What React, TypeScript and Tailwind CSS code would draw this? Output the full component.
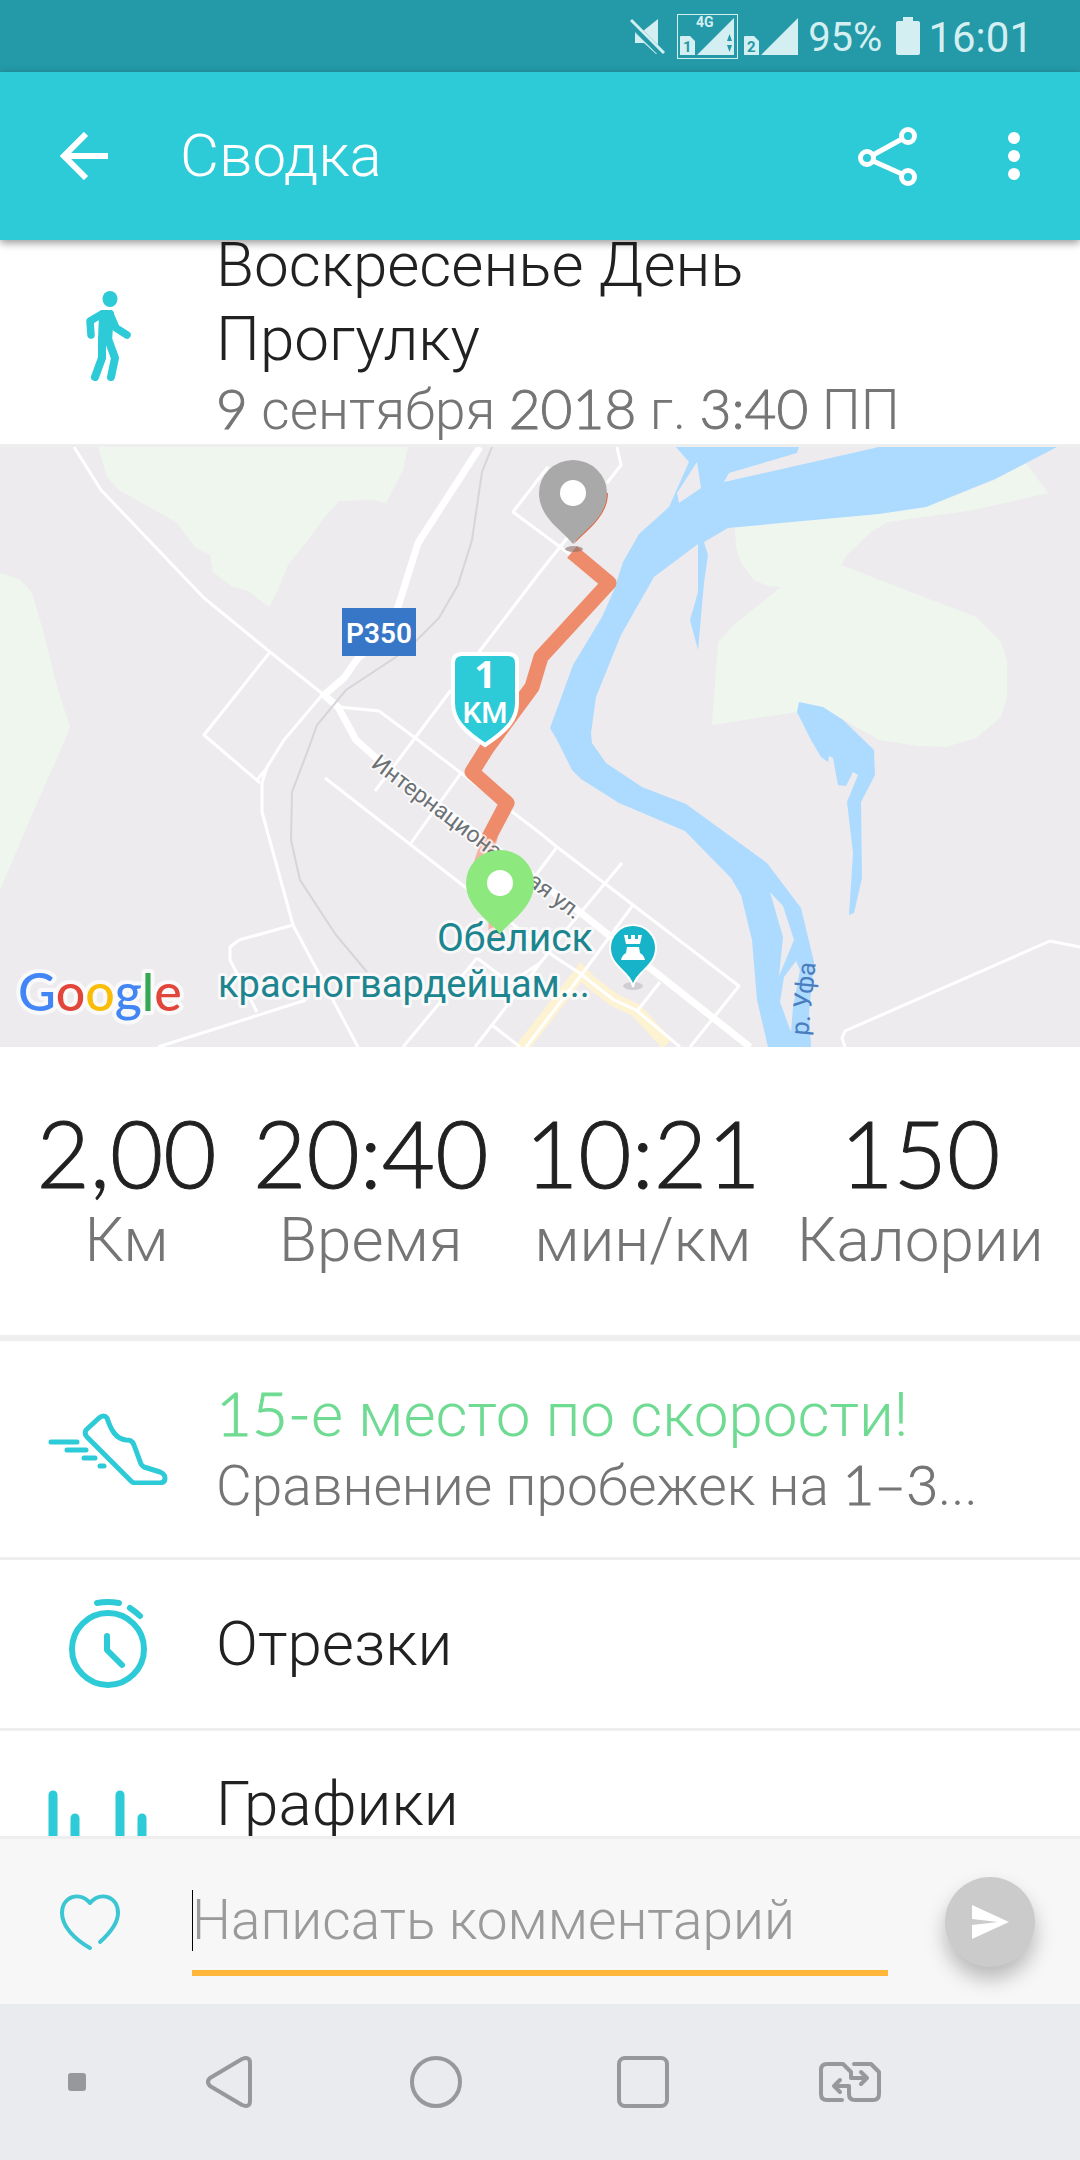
import type { ReactNode } from "react";

interface Stat {
  value: string;
  label: string;
}

const stats: Stat[] = [
  { value: "2,00", label: "Км" },
  { value: "20:40", label: "Время" },
  { value: "10:21", label: "мин/км" },
  { value: "150", label: "Калории" },
];

// digits use a slightly heavier face than the surrounding text
function Num({ children }: { children: ReactNode }) {
  return <span className="font-['Lato'] font-light [-webkit-text-stroke:1px]">{children}</span>;
}

function StatusBar() {
  return (
    <div className="flex h-[72px] shrink-0 items-center justify-end bg-[#2499a7] pr-[47px] font-normal text-[#d3eff1]">
      <svg className="mr-[11px] h-9 w-9" viewBox="0 0 36 36" fill="currentColor">
        <path d="M5 13h8L28 1v33l-4-3L5 15z" />
        <path d="M5 15v10h9l12 11h4z" />
        <path d="M0 4L32 36" stroke="#2499a7" strokeWidth="7" />
        <path d="M1 2L34 35" stroke="currentColor" strokeWidth="3" />
      </svg>
      <svg className="mr-1.5 h-[45px] w-[61px]" viewBox="0 0 61 45" fill="currentColor">
        <rect x=".5" y=".5" width="60" height="44" fill="none" stroke="currentColor" />
        <text x="19" y="13" fontSize="14" fontWeight="700">4G</text>
        <path d="M3 23q0-1 1-1h9l5 5v14H3zM20 41L57 4v37z" />
        <path d="M50 27l2.500-7 2.500 7zM50 31l2.500 7 2.500-7z" fill="#2499a7" />
        <text x="6" y="38" fontSize="15" fontWeight="700" fill="#2499a7">1</text>
      </svg>
      <svg className="mr-2.5 h-[45px] w-[54px]" viewBox="0 0 54 45" fill="currentColor">
        <path d="M0 23q0-1 1-1h9l5 5v14H0zM17 41L54 4v37z" />
        <text x="3" y="38" fontSize="15" fontWeight="700" fill="#2499a7">2</text>
      </svg>
      <span className="pt-1 text-[40px] leading-none">95%</span>
      <svg className="mr-2 ml-3.5 h-[38px] w-6" viewBox="0 0 24 38" fill="currentColor">
        <path d="M7 0h10v4h5q2 0 2 2v30q0 2-2 2H2q-2 0-2-2V6q0-2 2-2h5z" />
      </svg>
      <span className="pt-1 text-[42px] leading-none">16:01</span>
    </div>
  );
}

function Toolbar() {
  return (
    <header className="relative z-10 flex h-[168px] shrink-0 items-center bg-[#2dcad7] pr-[42px] pl-[60px] text-white shadow-[0_3px_8px_rgba(0,0,0,0.4)]">
      <button aria-label="Назад">
        <svg className="h-12 w-12" viewBox="0 0 48 48" fill="none" stroke="currentColor" strokeWidth="6">
          <path d="M26 2L4 24l22 22M4 24h44" />
        </svg>
      </button>
      <h1 className="ml-[72px] flex-1 text-[60px] leading-none">Сводка</h1>
      <button aria-label="Поделиться" className="mr-[72px]">
        <svg className="h-[60px] w-[60px]" viewBox="0 0 60 60" fill="none" stroke="currentColor" strokeWidth="5">
          <circle cx="9" cy="32" r="6.500" />
          <circle cx="50" cy="10" r="6.500" />
          <circle cx="50" cy="51" r="6.500" />
          <path d="M15 29L44 13M15 35l29 13" strokeWidth="5" />
        </svg>
      </button>
      <button aria-label="Ещё" className="px-[18px]">
        <svg className="h-12 w-3" viewBox="0 0 12 48" fill="currentColor">
          <circle cx="6" cy="6" r="6" />
          <circle cx="6" cy="24" r="6" />
          <circle cx="6" cy="42" r="6" />
        </svg>
      </button>
    </header>
  );
}

function RouteMap() {
  return (
    <svg
      role="img"
      aria-label="Карта маршрута"
      className="block h-[600px] w-full bg-[#edebee] font-normal"
      viewBox="0 0 1080 600"
      preserveAspectRatio="xMidYMid slice"
    >
      {/* parks */}
      <g fill="#eef6ee">
        <path d="M98 0L107 30 119 43 176 75 195 100 210 108 213 125 231 139 248 144 269 160 276 147 288 118 308 93 324 71 339 54 372 53 386 56 403 23 408 0z" />
        <path d="M0 126L21 133 32 146 43 183 57 240 70 280 62 300 34 363 0 443z" />
        <path d="M735 80L879 66 926 60 995 33 1026 16 1048 46 974 63 888 75 871 85 847 108 841 118 976 170 1001 195 1007 213V250L1001 270 976 291 946 300 919 299 879 293 822 260 797 265 712 278 718 195 736 176 781 140 767 139 754 133 741 116 736 100z" />
      </g>

      {/* river */}
      <g fill="#addbff">
        <path
          fillRule="evenodd"
          d="M676 0L689 15 669 60 639 87 623 115 614 143 602 170 573 218 550 281 557 293 572 323 581 332 619 356 685 384 731 431 741 448 752 493 757 553 768 600H811L809 566 814 515 801 461 767 416 686 357 642 340 606 316 592 296 591 286 596 250 621 188 654 130 698 97V145L690 173 698 203 704 136 708 108 704 95 728 81 879 67 926 60 995 32 1057 0H879L724 35 729 26 797 6 799 0zM697 15L701 41 679 56 677 46zM770 445L783 459 794 493 779 529 783 490zM796 514L800 523 793 560 791 585 780 555 784 530z"
        />
        <path d="M799 255L823 260 843 273 874 303 875 328 861 355 862 431 854 466 849 468 853 406 847 355 858 328 853 325 846 339 838 338 833 311 829 309 828 315 821 310 811 293 797 265z" />
      </g>

      {/* roads */}
      <g fill="none" stroke="#fdf3d2" strokeWidth="13">
        <path d="M518 606L540 578 581 525 592 536 614 553 636 563 667 597" />
      </g>
      <g fill="none" stroke="#fff" strokeWidth="3" strokeLinejoin="round">
        <path d="M74 0L101 43 204 151 270 205 324 248M270 205L204 288 260 336M257 333L267 321" />
        <path d="M322 248L284 293 267 320 262 336V365L293 478 317 523 358 600" />
        <path d="M339 260L379 264 418 293 461 326 540 386 557 400 633 458 739 539 690 600" />
        <path d="M451 243L406 303 375 344M479 205L540 125 572 85M540 30L513 65 571 108M540 30L548 20M617 0L621 18 607 36" />
        <path d="M325 331L465 440 555 510 581 527 592 536 614 553 636 563 680 600M461 326L411 396M622 416L566 483 492 578M557 400L530 436M633 458L585 523 526 600M660 535L638 563" />
        <path d="M477 511L403 600M477 511L510 536 540 516M475 600L492 578 520 600" />
        <path d="M293 478L239 493 230 500V513L257 565M158 600L306 553" />
        <path d="M1080 500L1050 494 845 584 842 591 845 600" />
        <path d="M480 0L418 96 398 160 384 190 358 211 344 231 324 248 338 260 356 293 375 310 581 466 650 521 750 600" strokeWidth="7" />
      </g>
      <path
        d="M492 0L482 25 472 93 458 138 439 171 417 193 396 210 346 243 317 278 308 303 292 345 291 393 300 433 336 488 367 525"
        fill="none"
        stroke="#d4d6d9"
        strokeWidth="2"
      />

      {/* track */}
      <g fill="none" strokeWidth="15" strokeLinejoin="round">
        <path d="M491 388L480 420 496 460V495" stroke="#f3b5a3" />
        <path d="M572 105L609 136 541 210 532 240 487 301 472 325 507 356 488 392" stroke="#ee8b6b" />
      </g>
      <ellipse cx="574" cy="102" rx="9" ry="3" fill="#8b6f68" opacity=".6" />

      <g paintOrder="stroke" stroke="#fff" strokeOpacity=".7" strokeLinejoin="round">
        <text transform="translate(370 319) rotate(37)" fontSize="23" fill="#6d7276" strokeWidth="4">
          Интернациональная ул.
        </text>
        <text transform="translate(808 589) rotate(-84)" fontSize="25" fill="#4a7cc0" strokeWidth="0">
          р. Уфа
        </text>
        <text x="437" y="504" fontSize="39" fill="#1c858f" strokeWidth="6">
          Обелиск
        </text>
        <text x="218" y="550" fontSize="38" fill="#1c858f" strokeWidth="6">
          красногвардейцам...
        </text>
      </g>

      {/* road shield */}
      <rect x="342" y="161" width="74" height="48" fill="#3877c7" />
      <text x="379" y="196" textAnchor="middle" fontSize="28" fontWeight="600" fill="#fff">
        P350
      </text>

      {/* kilometre marker */}
      <path
        d="M462 207H508Q517 207 517 216V256C517 273 506 284 485 298C464 284 453 273 453 256V216Q453 207 462 207z"
        fill="#2dcad7"
        stroke="#fff"
        strokeWidth="4"
      />
      <text x="485" y="241" textAnchor="middle" fontSize="38" fontWeight="700" fontFamily="'Open Sans', sans-serif" fill="#fff">
        1
      </text>
      <text x="485" y="276" textAnchor="middle" fontSize="30" fontWeight="500" fill="#fff">
        KM
      </text>

      {/* finish and start pins */}
      <g transform="translate(573 46)">
        <path d="M1 51C11 39 35 25 35 0L28 0z" fill="#e0693f" />
        <path d="M0 51C-10 38-34 25-34 0A34 33 0 0 1 34 0C34 25 10 38 0 51z" fill="#a9a9a9" />
        <circle r="13" fill="#fff" />
      </g>
      <g transform="translate(500 436)">
        <path d="M0 51C-10 38-34 25-34 0A34 33 0 0 1 34 0C34 25 10 38 0 51z" fill="#8de87e" />
        <circle r="13" fill="#fff" />
      </g>

      {/* monument */}
      <ellipse cx="633" cy="539" rx="10" ry="4" fill="#d0ced2" />
      <path
        d="M633 540C630 524 610 520 610 501A23 23 0 0 1 656 501C656 520 636 524 633 540z"
        fill="#17b3c8"
        stroke="#fff"
        strokeWidth="2"
      />
      <path
        d="M624 488h4v4h3v-4h4v4h3v-4h4l-2 9h-14zM627 500h12l1 6q4 2 5 7h-24q1-5 5-7z"
        fill="#fff"
      />

      <text
        x="18"
        y="564"
        fontSize="52"
        fontFamily="Lato, sans-serif"
        fontWeight="500"
        paintOrder="stroke"
        stroke="#fff"
        strokeOpacity=".7"
        strokeWidth="8"
        strokeLinejoin="round"
      >
        <tspan fill="#4285f4">G</tspan>
        <tspan fill="#e2453a">o</tspan>
        <tspan fill="#fabc05">o</tspan>
        <tspan fill="#4285f4">g</tspan>
        <tspan fill="#36a755">l</tspan>
        <tspan fill="#e2453a">e</tspan>
      </text>
    </svg>
  );
}

function WalkIcon() {
  return (
    <svg className="h-[90px] w-[46px]" viewBox="0 0 46 90" fill="none" stroke="currentColor" strokeLinecap="round" strokeLinejoin="round">
      <ellipse cx="25" cy="8" rx="7.500" ry="8" fill="currentColor" stroke="none" />
      <path d="M17 23L5 30l1 14" strokeWidth="7.500" />
      <path d="M25 23l6 14 11 7" strokeWidth="7.500" />
      <path d="M18 23L25 23 23 50H17z" strokeWidth="8" fill="currentColor" />
      <path d="M17 48v19L10 86" strokeWidth="8" />
      <path d="M23 48l7 19-4 19" strokeWidth="8" />
    </svg>
  );
}

function ShoeIcon() {
  return (
    <svg className="h-[72px] w-[120px]" viewBox="0 0 120 72" fill="none" stroke="currentColor" strokeWidth="5" strokeLinecap="round" strokeLinejoin="round">
      <path d="M38 17L51 5q5-4 8 0C63 17 68 26 78 27q4 0 5 1 2 1 3 4l7 19q1 2 3 3l16 5q5 2 5 6 0 5-6 5H87q-2 0-4-2L39 24q-3-3-1-7z" />
      <path d="M3 29h26M19 37h19M36 45h11M52 53h4" />
    </svg>
  );
}

function StopwatchIcon() {
  return (
    <svg className="h-[90px] w-20" viewBox="0 0 80 90" fill="none" stroke="currentColor" strokeWidth="6" strokeLinecap="round" strokeLinejoin="round">
      <circle cx="40" cy="50" r="36" />
      <path d="M39 37v14l15 15" />
      <path d="M29 4q10-2 22 0M62 9q6 4 10 8" />
    </svg>
  );
}

function ChartIcon() {
  return (
    <svg className="h-[90px] w-[120px]" viewBox="0 0 120 90" fill="none" stroke="currentColor" strokeWidth="9" strokeLinecap="round">
      <path d="M5 5v80M27 28v57M49 56v29M72 5v80M94 28v57M115 56v29" />
    </svg>
  );
}

function IconCell({ children }: { children: ReactNode }) {
  return (
    <span className="flex w-[216px] shrink-0 items-center justify-center text-[#2dcad7]">{children}</span>
  );
}

function CommentBar() {
  return (
    <form className="flex h-[168px] shrink-0 items-center border-t-3 border-[#eee] bg-[#f7f7f7] pr-[45px]">
      <button type="button" aria-label="Нравится" className="flex w-[180px] justify-center text-[#3cc6d3]">
        <svg className="h-[60px] w-[60px]" viewBox="0 0 60 60" fill="none" stroke="currentColor" strokeWidth="4" strokeLinecap="round" strokeLinejoin="round">
          <path d="M30 56C14 47 2 34 2 21C2 4 20-1 30 11C40-1 58 4 58 21C58 31 50 41 40 50" />
        </svg>
      </button>
      <div className="relative ml-3 flex-1 border-b-6 border-[#ffb639] pt-3 pb-2.5">
        <input
          aria-label="Написать комментарий"
          placeholder="Написать комментарий"
          className="block h-20 w-full bg-transparent text-[55px] font-light text-[#212121] outline-none placeholder:text-[#9a9a9a] placeholder:opacity-100"
        />
        <span className="absolute top-[22px] left-0 h-[61px] w-px bg-black" />
      </div>
      <button
        aria-label="Отправить"
        className="ml-[57px] flex h-[90px] w-[90px] items-center justify-center rounded-full bg-[#cbcbcb] shadow-[0_12px_20px_rgba(0,0,0,0.25)]"
      >
        <svg className="h-[34px] w-[37px]" viewBox="0 0 37 34" fill="#fff">
          <path d="M0 0L37 17 0 34V20l26-3L0 14z" />
        </svg>
      </button>
    </form>
  );
}

function NavBar() {
  return (
    <nav className="flex h-[156px] shrink-0 items-center bg-[#e9ebee] pr-[127px] pl-[29px] text-[#97989b]">
      <button aria-label="Скрыть панель" className="flex w-24 justify-center">
        <span className="h-[18px] w-[18px] rounded-[3px] bg-[#97989b]" />
      </button>
      <button aria-label="Назад" className="flex flex-1 justify-center">
        <svg className="h-[52px] w-[46px]" viewBox="0 0 46 52" fill="none" stroke="currentColor" strokeWidth="4" strokeLinejoin="round">
          <path d="M4 22L36 3q8-3 8 4v38q0 7-8 4L4 30q-4-4 0-8z" />
        </svg>
      </button>
      <button aria-label="Домой" className="flex flex-1 justify-center">
        <span className="h-[52px] w-[52px] rounded-full border-4 border-[#97989b]" />
      </button>
      <button aria-label="Недавние" className="flex flex-1 justify-center">
        <span className="h-[52px] w-[52px] rounded-lg border-4 border-[#97989b]" />
      </button>
      <button aria-label="Сменить SIM" className="flex flex-1 justify-center">
        <svg className="h-10 w-[62px]" viewBox="0 0 62 40" fill="none" stroke="currentColor" strokeWidth="4" strokeLinecap="round" strokeLinejoin="round">
          <path d="M23 38H8q-6 0-6-6V8q0-6 6-6h16l8 8v6h15M42 10l6 6-6 6" />
          <path d="M35 2h17l8 8v22q0 6-6 6H36q-6 0-6-6v-8H16M21 18l-6 6 6 6" />
        </svg>
      </button>
    </nav>
  );
}

export default function App() {
  return (
    <div className="flex h-screen flex-col overflow-hidden bg-white font-['Roboto',sans-serif] text-[55px] leading-[64px] font-light text-[#212121]">
      <StatusBar />
      <Toolbar />

      <main className="min-h-0 flex-1 overflow-hidden">
        {/* the list is scrolled a little under the toolbar */}
        <section className="-mt-3 flex h-[219px] border-b-3 border-[#eee]">
          <IconCell>
            <WalkIcon />
          </IconCell>
          <div className="flex-1">
            <h2 className="text-[62px] leading-[74px]">
              Воскресенье День
              <br />
              Прогулку
            </h2>
            <p className="text-[#757575]">
              <Num>9</Num> сентября <Num>2018</Num> г. <Num>3:40</Num> ПП
            </p>
          </div>
        </section>

        <RouteMap />

        <section className="flex h-[294px] justify-evenly border-b-6 border-[#eee] pt-[60px]">
          {stats.map((stat) => (
            <div key={stat.label} className="text-center">
              <div className="text-[92px] leading-[92px]">
                <Num>{stat.value}</Num>
              </div>
              <div className="text-[62px] leading-[74px] text-[#757575]">{stat.label}</div>
            </div>
          ))}
        </section>

        <a href="#records" className="flex h-[219px] items-center border-b-3 border-[#eee] pr-20">
          <IconCell>
            <ShoeIcon />
          </IconCell>
          <span className="min-w-0 flex-1 pb-1.5">
            <span className="block text-[62px] leading-[74px] text-[#6fdb92]">
              <Num>15-</Num>е место по скорости!
            </span>
            <span className="block truncate text-[#757575]">
              Сравнение пробежек на <Num>1–3</Num>...
            </span>
          </span>
        </a>

        <a href="#splits" className="flex h-[171px] items-center border-b-3 border-[#eee]">
          <IconCell>
            <StopwatchIcon />
          </IconCell>
          <span className="text-[62px] leading-[74px]">Отрезки</span>
        </a>

        <a href="#charts" className="flex h-[171px]">
          <IconCell>
            <span className="pt-9">
              <ChartIcon />
            </span>
          </IconCell>
          <span className="pt-9 text-[62px] leading-[74px]">Графики</span>
        </a>
      </main>

      <CommentBar />
      <NavBar />
    </div>
  );
}
